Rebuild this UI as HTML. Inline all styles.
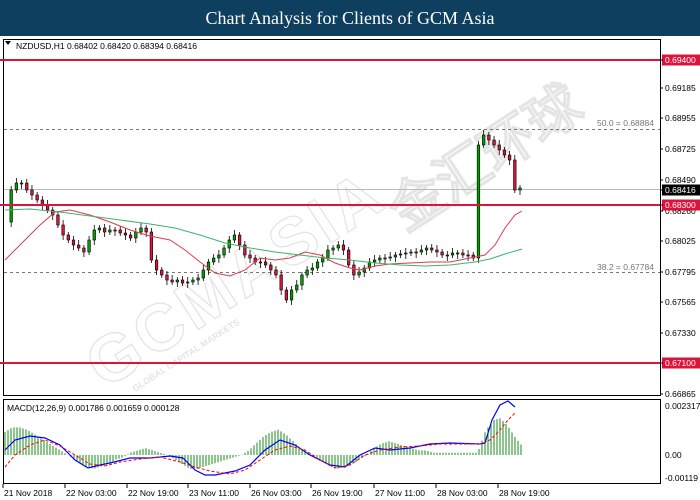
<!DOCTYPE html>
<html><head><meta charset="utf-8"><style>
body{margin:0;width:700px;height:500px;background:#fff;overflow:hidden;font-family:"Liberation Sans",sans-serif}
#t{position:absolute;left:0;top:0;width:700px;height:36px;background:#0e3f5f;color:#fff;font-family:"Liberation Serif",serif;font-size:18px;text-align:center;line-height:36px}
svg{position:absolute;left:0;top:0}
</style></head><body>
<div id="t">Chart Analysis for Clients of GCM Asia</div>
<svg id="s" width="700" height="500" font-family="Liberation Sans, sans-serif" font-size="8.5">
<g opacity="0.4" fill="none" stroke="#bbb" stroke-width="1.3" font-family="Liberation Sans, sans-serif" font-weight="bold">
<text x="105" y="390" font-size="66" transform="rotate(-33 105 390)" letter-spacing="4">GCMASIA</text>
<text x="405" y="232" font-size="54" transform="rotate(-33 405 232)">金汇环球</text>
<text x="135" y="392" font-size="9" transform="rotate(-33 135 392)" fill="#bbb" stroke="none">GLOBAL CAPITAL MARKETS</text>
</g>
<rect x="3.5" y="39.5" width="657" height="356" fill="none" stroke="#000"/>
<rect x="3.5" y="399.5" width="657" height="84" fill="none" stroke="#000"/>
<path d="M5 41 l6 0 l-3 4z" fill="#000"/>
<text x="16" y="49" font-size="8.5">NZDUSD,H1  0.68402 0.68420 0.68394 0.68416</text>
<text x="7" y="411" font-size="8.5">MACD(12,26,9) 0.001786 0.001659 0.000128</text>
<line x1="4" y1="129.5" x2="660" y2="129.5" stroke="#777" stroke-dasharray="3,3"/>
<line x1="4" y1="272.5" x2="660" y2="272.5" stroke="#777" stroke-dasharray="3,3"/>
<text x="597" y="126" fill="#777">50.0 = 0.68884</text>
<text x="597" y="270" fill="#777">38.2 = 0.67784</text>
<line x1="4" y1="189.5" x2="660" y2="189.5" stroke="#bbb"/>
<g id="c"></g>
<polyline fill="none" stroke="#e03a4c" stroke-width="1" points="5,260 20,245 40,225 55,212 70,210 90,215 110,222 130,230 150,236 170,240 185,250 200,262 215,273 230,276 245,270 260,258 275,260 290,258 305,252 320,255 335,263 350,268 360,270 375,266 390,264 410,263 430,262 450,262 470,258 485,255 495,245 505,228 515,215 522,211"/>
<polyline fill="none" stroke="#3db36b" stroke-width="1" points="5,210 30,209 60,212 90,216 120,220 150,224 175,228 200,235 225,243 250,248 275,252 300,255 325,258 350,260 375,263 400,265 425,266 450,265 475,262 490,259 505,254 522,249"/>
<line x1="0" y1="60" x2="660" y2="60" stroke="#dc143c" stroke-width="2"/>
<line x1="0" y1="205" x2="660" y2="205" stroke="#dc143c" stroke-width="2"/>
<line x1="0" y1="363" x2="660" y2="363" stroke="#dc143c" stroke-width="2"/>
<g id="m"></g>
<g id="ax"></g>
</svg>
<script>
var ys=[222,190,183,183,190,195,200,205,210,215,225,235,240,245,248,252,240,230,228,232,230,230,233,235,238,232,228,232,260,270,275,280,282,280,283,282,280,278,270,262,258,255,248,240,235,245,255,258,262,262,265,270,275,290,300,290,285,275,270,268,262,258,250,248,245,250,265,275,272,268,262,260,258,258,257,255,254,253,252,252,250,248,250,252,255,255,253,253,255,255,258,145,135,140,145,150,155,160,190,188];
var s='';
var step=(520-6)/(ys.length-1);
for(var i=1;i<ys.length;i++){var x=6+i*step,o=ys[i-1],c=ys[i];var t=Math.min(o,c),b=Math.max(o,c);if(b-t<1)b=t+1;
var up=c<o;s+='<line x1="'+x+'" y1="'+(t-3-(i%3))+'" x2="'+x+'" y2="'+(b+3+(i%2)*2)+'" stroke="#000" stroke-width="0.8"/>';
s+='<rect x="'+(x-1.3)+'" y="'+t+'" width="2.6" height="'+(b-t)+'" fill="'+(up?'#00a000':'#dc143c')+'" stroke="#000" stroke-width="0.6"/>';}
document.getElementById('c').innerHTML=s;
var m='';var h=[10,12,12,11,9,7,5,3,1,-1,-3,-5,-6,-5,-4,-2,-1,1,2,3,2,1,0,-2,-4,-6,-6,-5,-4,-3,-2,-1,0,2,5,8,10,11,9,6,3,1,-1,-3,-5,-6,-5,-4,-2,0,3,5,6,5,4,3,2,2,1,1,1,1,1,1,1,10,15,16,13,8,4];
var n=h.length-1;
for(var x=5;x<=522;x+=3){var f=(x-5)/(522-5)*n,k=Math.min(Math.floor(f),n-1),r=f-k,v=(h[k]*(1-r)+h[k+1]*r)*2.3;
m+='<line x1="'+x+'" y1="455" x2="'+x+'" y2="'+(455-v)+'" stroke="#1a8c1a" stroke-width="1"/>';}
m+='<polyline fill="none" stroke="#0000ff" stroke-width="1.2" points="5,450 15,440 30,436 45,438 60,445 75,460 88,468 100,465 110,463 130,458 150,458 170,456 183,458 195,470 205,475 215,475 235,471 250,465 265,450 280,440 295,445 310,455 330,465 345,467 360,455 375,448 390,450 410,448 430,444 450,443 480,444 485,443 492,420 500,405 508,401 515,407"/>';
m+='<polyline fill="none" stroke="#ff0000" stroke-width="1" stroke-dasharray="3,2" points="5,467 15,455 30,445 45,440 60,446 75,455 90,464 105,466 120,462 140,459 160,457 180,462 195,467 210,471 230,474 245,470 260,460 275,450 290,446 305,450 320,460 335,468 350,465 365,455 380,450 400,447 420,446 440,444 480,444 490,440 500,430 508,420 515,413"/>';
document.getElementById('m').innerHTML=m;
var L=[[0.69400,60,1],[0.69185,88],[0.68955,118],[0.68725,149],[0.68490,180],[0.68260,211],[0.68025,241],[0.67795,272],[0.67565,302],[0.67330,333],[0.67100,363,1],[0.66865,394],[0.68416,190,2],[0.68300,205,1]];
var a='';L.forEach(function(l){var y=l[1];
if(l[2]==1)a+='<rect x="662" y="'+(y-5.5)+'" width="38" height="11" fill="#dc143c"/>';
if(l[2]==2)a+='<rect x="662" y="'+(y-5.5)+'" width="38" height="11" fill="#000"/>';
a+='<line x1="660" y1="'+y+'" x2="663" y2="'+y+'" stroke="#000"/><text x="665" y="'+(y+3)+'" fill="'+(l[2]?'#fff':'#000')+'">'+l[0].toFixed(5)+'</text>';});
a+='<text x="665" y="409">0.002317</text><text x="665" y="458">0.00</text><text x="665" y="481">-0.00119</text>';
var T=[[3,'21 Nov 2018'],[65,'22 Nov 03:00'],[127,'22 Nov 19:00'],[188,'23 Nov 11:00'],[250,'26 Nov 03:00'],[311,'26 Nov 19:00'],[374,'27 Nov 11:00'],[436,'28 Nov 03:00'],[498,'28 Nov 19:00']];
T.forEach(function(t){a+='<line x1="'+t[0]+'" y1="484" x2="'+t[0]+'" y2="488" stroke="#000"/><text x="'+(t[0]+1)+'" y="496">'+t[1]+'</text>';});
document.getElementById('ax').innerHTML=a;
</script>
</body></html>
